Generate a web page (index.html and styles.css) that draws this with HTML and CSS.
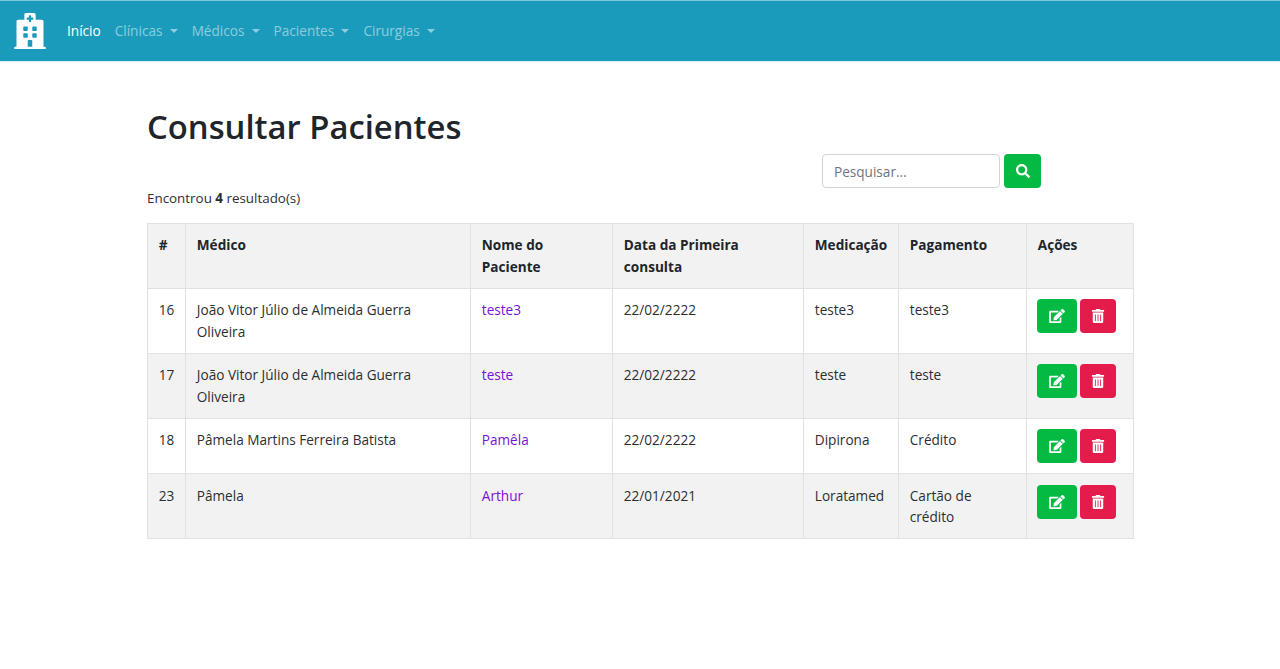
FILE: index.html
```html
<!DOCTYPE html>
<html lang="pt-BR">
<head>
	<meta charset="UTF-8">
	<title>Consultar Pacientes</title>
	<link rel="stylesheet" href="styles.css">
</head>
<body>
	<svg class="defs" width="0" height="0">
		<symbol id="i-edit" viewBox="0 0 576 512"><path d="M402.6 83.2l90.2 90.2c3.8 3.8 3.8 10 0 13.8L274.4 405.6l-92.8 10.3c-12.4 1.4-22.9-9.1-21.5-21.5l10.3-92.8L388.8 83.2c3.8-3.8 10-3.8 13.8 0zm162-22.9l-48.8-48.8c-15.2-15.2-39.9-15.2-55.2 0l-35.4 35.4c-3.8 3.8-3.8 10 0 13.8l90.2 90.2c3.8 3.8 10 3.8 13.8 0l35.4-35.4c15.2-15.3 15.2-40 0-55.2zM384 346.2V448H64V128h229.8c3.2 0 6.2-1.3 8.5-3.5l40-40c7.6-7.6 2.2-20.5-8.5-20.5H48C21.5 64 0 85.5 0 112v352c0 26.5 21.5 48 48 48h352c26.5 0 48-21.5 48-48V306.2c0-10.7-12.9-16-20.5-8.5l-40 40c-2.2 2.3-3.5 5.3-3.5 8.5z"/></symbol>
		<symbol id="i-trash" viewBox="0 0 448 512"><path d="M32 464a48 48 0 0 0 48 48h288a48 48 0 0 0 48-48V128H32zm272-256a16 16 0 0 1 32 0v224a16 16 0 0 1-32 0zm-96 0a16 16 0 0 1 32 0v224a16 16 0 0 1-32 0zm-96 0a16 16 0 0 1 32 0v224a16 16 0 0 1-32 0zM432 32H312l-9.4-18.7A24 24 0 0 0 281.1 0H166.8a23.72 23.72 0 0 0-21.4 13.3L136 32H16A16 16 0 0 0 0 48v32a16 16 0 0 0 16 16h416a16 16 0 0 0 16-16V48a16 16 0 0 0-16-16z"/></symbol>
	</svg>

	<nav class="navbar">
		<a class="brand" href="#">
			<svg class="brand-icon" viewBox="0 0 448 512"><path d="M448 492v20H0v-20c0-6.627 5.373-12 12-12h20V120c0-13.255 10.745-24 24-24h88V24c0-13.255 10.745-24 24-24h112c13.255 0 24 10.745 24 24v72h88c13.255 0 24 10.745 24 24v360h20c6.627 0 12 5.373 12 12zM308 192h-40c-6.627 0-12 5.373-12 12v40c0 6.627 5.373 12 12 12h40c6.627 0 12-5.373 12-12v-40c0-6.627-5.373-12-12-12zm-168 64h40c6.627 0 12-5.373 12-12v-40c0-6.627-5.373-12-12-12h-40c-6.627 0-12 5.373-12 12v40c0 6.627 5.373 12 12 12zm104 128h-40c-6.627 0-12 5.373-12 12v84h64v-84c0-6.627-5.373-12-12-12zm64-96h-40c-6.627 0-12 5.373-12 12v40c0 6.627 5.373 12 12 12h40c6.627 0 12-5.373 12-12v-40c0-6.627-5.373-12-12-12zm-116 12c0-6.627-5.373-12-12-12h-40c-6.627 0-12 5.373-12 12v40c0 6.627 5.373 12 12 12h40c6.627 0 12-5.373 12-12v-40zM182 96h26v26a6 6 0 0 0 6 6h20a6 6 0 0 0 6-6V96h26a6 6 0 0 0 6-6V70a6 6 0 0 0-6-6h-26V38a6 6 0 0 0-6-6h-20a6 6 0 0 0-6 6v26h-26a6 6 0 0 0-6 6v20a6 6 0 0 0 6 6z"/></svg>
		</a>
		<ul class="nav-list">
			<li><a class="nav-link active" href="#">Início</a></li>
			<li><a class="nav-link caret" href="#">Clínicas</a></li>
			<li><a class="nav-link caret" href="#">Médicos</a></li>
			<li><a class="nav-link caret" href="#">Pacientes</a></li>
			<li><a class="nav-link caret" href="#">Cirurgias</a></li>
		</ul>
	</nav>

	<main class="content">
		<div class="top">
			<div class="top-left">
				<h1>Consultar Pacientes</h1>
				<p class="count">Encontrou <b>4</b> resultado(s)</p>
			</div>
			<form class="search">
				<input class="search-input" type="text" placeholder="Pesquisar...">
				<button class="btn btn-green btn-search" type="button">
					<svg class="ico" viewBox="0 0 512 512"><path d="M505 442.7L405.3 343c-4.5-4.5-10.6-7-17-7H372c27.6-35.3 44-79.7 44-128C416 93.1 322.9 0 208 0S0 93.1 0 208s93.1 208 208 208c48.3 0 92.7-16.4 128-44v16.3c0 6.4 2.5 12.5 7 17l99.7 99.7c9.4 9.4 24.6 9.4 33.9 0l28.3-28.3c9.4-9.4 9.4-24.6.1-34zM208 336c-70.7 0-128-57.2-128-128 0-70.7 57.2-128 128-128 70.7 0 128 57.2 128 128 0 70.7-57.2 128-128 128z"/></svg>
				</button>
			</form>
		</div>

		<table class="table">
			<colgroup>
				<col class="c-id"><col class="c-medico"><col class="c-nome"><col class="c-data"><col class="c-med"><col class="c-pag"><col class="c-acoes">
			</colgroup>
			<thead>
				<tr>
					<th>#</th>
					<th>Médico</th>
					<th>Nome do Paciente</th>
					<th>Data da Primeira consulta</th>
					<th>Medicação</th>
					<th>Pagamento</th>
					<th>Ações</th>
				</tr>
			</thead>
			<tbody>
				<tr>
					<td>16</td>
					<td>João Vitor Júlio de Almeida Guerra Oliveira</td>
					<td><a href="#">teste3</a></td>
					<td>22/02/2222</td>
					<td>teste3</td>
					<td>teste3</td>
					<td class="acoes">
						<button class="btn btn-green btn-edit" type="button"><svg class="ico"><use href="#i-edit"/></svg></button>
						<button class="btn btn-red" type="button"><svg class="ico"><use href="#i-trash"/></svg></button>
					</td>
				</tr>
				<tr>
					<td>17</td>
					<td>João Vitor Júlio de Almeida Guerra Oliveira</td>
					<td><a href="#">teste</a></td>
					<td>22/02/2222</td>
					<td>teste</td>
					<td>teste</td>
					<td class="acoes">
						<button class="btn btn-green btn-edit" type="button"><svg class="ico"><use href="#i-edit"/></svg></button>
						<button class="btn btn-red" type="button"><svg class="ico"><use href="#i-trash"/></svg></button>
					</td>
				</tr>
				<tr>
					<td>18</td>
					<td>Pâmela Martins Ferreira Batista</td>
					<td><a href="#">Pamêla</a></td>
					<td>22/02/2222</td>
					<td>Dipirona</td>
					<td>Crédito</td>
					<td class="acoes">
						<button class="btn btn-green btn-edit" type="button"><svg class="ico"><use href="#i-edit"/></svg></button>
						<button class="btn btn-red" type="button"><svg class="ico"><use href="#i-trash"/></svg></button>
					</td>
				</tr>
				<tr>
					<td>23</td>
					<td>Pâmela</td>
					<td><a href="#">Arthur</a></td>
					<td>22/01/2021</td>
					<td>Loratamed</td>
					<td>Cartão de crédito</td>
					<td class="acoes">
						<button class="btn btn-green btn-edit" type="button"><svg class="ico"><use href="#i-edit"/></svg></button>
						<button class="btn btn-red" type="button"><svg class="ico"><use href="#i-trash"/></svg></button>
					</td>
				</tr>
			</tbody>
		</table>
	</main>
</body>
</html>
```

FILE: styles.css
```css
*{
	box-sizing: border-box;
}
body{
	margin: 0;
	background: #fff;
	color: #2b2f33;
	font-family: "Open Sans", "Noto Sans", sans-serif;
	font-size: 13.6px;
	line-height: 21.6px;
}
a{
	text-decoration: none;
}
.defs{
	position: absolute;
}

/* navbar */
.navbar{
	display: flex;
	align-items: center;
	height: 62px;
	padding: 0 14px;
	background: #1a9bbb;
	border-top: 1px solid #7fc7da;
	border-bottom: 1px solid #d5edf3;
}
.brand{
	display: flex;
	margin-right: 14px;
}
.brand-icon{
	width: 32px;
	height: 36px;
	fill: #fff;
}
.nav-list{
	display: flex;
	margin: 0;
	padding: 0;
	list-style: none;
}
.nav-link{
	display: block;
	padding: 0 7px;
	color: rgba(255,255,255,.5);
}
.nav-link.active{
	color: #fff;
}
.caret::after{
	content: "";
	display: inline-block;
	margin-left: 7.2px;
	vertical-align: 3px;
	border-top: 4.5px solid;
	border-left: 4.5px solid transparent;
	border-right: 4.5px solid transparent;
}

/* page */
.content{
	width: 986px;
	margin: 0 auto;
	padding-top: 42px;
}
.top{
	display: flex;
	justify-content: space-between;
	align-items: flex-start;
	margin-bottom: 13px;
}
h1{
	margin: 0 0 38px;
	color: #212529;
	font-size: 32.8px;
	font-weight: 600;
	line-height: 46px;
}
.count{
	margin: 0;
	font-size: 13.4px;
}
.count b{
	font-weight: 700;
}

/* search */
.search{
	display: flex;
	gap: 4px;
	margin-top: 50px;
	margin-right: 92px;
}
.search-input{
	width: 178px;
	height: 34px;
	padding: 0 11px;
	font: inherit;
	color: #495057;
	border: 1px solid #ced4da;
	border-radius: 4px;
}
.search-input::placeholder{
	color: #6c757d;
}

/* buttons */
.btn{
	display: inline-flex;
	align-items: center;
	justify-content: center;
	height: 34px;
	padding: 0;
	border: 0;
	border-radius: 4px;
	vertical-align: top;
}
.btn-green{
	background: #04ba43;
}
.btn-red{
	width: 36px;
	background: #e31c4c;
}
.btn-edit{
	width: 40px;
}
.btn-search{
	width: 37px;
}
.ico{
	width: 14px;
	height: 14px;
	fill: #fff;
}
.btn-edit .ico{
	width: 16px;
}

/* table */
.table{
	width: 986px;
	border-collapse: collapse;
	table-layout: fixed;
}
.table th,
.table td{
	padding: 10.5px 10.8px 10.3px;
	border: 1px solid #dee2e6;
	text-align: left;
	vertical-align: top;
}
.table th{
	color: #212529;
	font-weight: 700;
	background: #f2f2f2;
}
.table tbody tr:nth-child(even){
	background: #f2f2f2;
}
.table td a{
	color: #7b0fd6;
}
.table td.acoes{
	padding-left: 10.3px;
	white-space: nowrap;
	font-size: 0;
}
.acoes .btn + .btn{
	margin-left: 3px;
}
.c-id{ width: 38px; }
.c-medico{ width: 285px; }
.c-nome{ width: 142px; }
.c-data{ width: 191px; }
.c-med{ width: 95px; }
.c-pag{ width: 128px; }
.c-acoes{ width: 107px; }
```
